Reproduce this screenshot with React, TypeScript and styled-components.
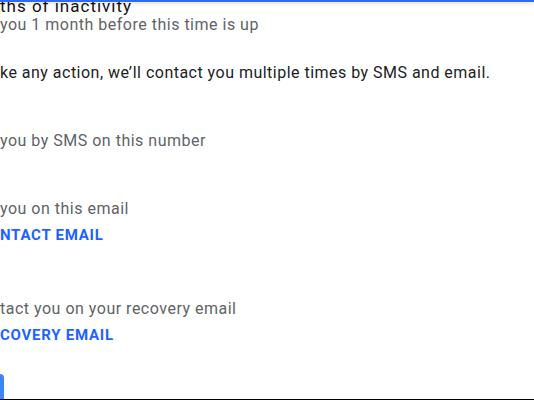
import styled, { createGlobalStyle } from "styled-components";

const GlobalStyle = createGlobalStyle`
  html, body {
    margin: 0;
    padding: 0;
    background: #ffffff;
  }
  body {
    font-family: Roboto, "Liberation Sans", Arial, sans-serif;
    -webkit-font-smoothing: antialiased;
  }
`;

const rows = [
  { text: "you by SMS on this number", gap: 48 },
  { text: "you on this email", action: "NTACT EMAIL", gap: 48 },
  { text: "tact you on your recovery email", action: "COVERY EMAIL", gap: 54 },
];

export default function App() {
  return (
    <Frame>
      <GlobalStyle />
      <TopBar />
      <Content>
        <Heading>ths of inactivity</Heading>
        <Hint>you 1 month before this time is up</Hint>
        <Notice>
          ke any action, we’ll contact you multiple times by SMS and email.
        </Notice>
        {rows.map(({ text, action, gap }) => (
          <Row key={text} $gap={gap}>
            <Hint>{text}</Hint>
            {action && <ActionLink>{action}</ActionLink>}
          </Row>
        ))}
        <SaveButton aria-label="Save" />
      </Content>
    </Frame>
  );
}

const Frame = styled.div`
  width: 534px;
  height: 400px;
  box-sizing: border-box;
  overflow: hidden;
  border-bottom: 1px solid #000000;
  background: #ffffff;
`;

const TopBar = styled.div`
  position: fixed;
  top: 0;
  left: 0;
  width: 534px;
  height: 2px;
  background: #2f6bea;
  box-shadow: 0 1px 4px rgba(0, 0, 0, 0.22);
  z-index: 2;
`;

const Content = styled.main`
  display: flex;
  flex-direction: column;
  align-items: flex-start;
  margin-top: -3px;
`;

const Heading = styled.h2`
  margin: 0;
  font-size: 17px;
  line-height: 18px;
  font-weight: 400;
  letter-spacing: 1px;
  color: #111111;
  white-space: nowrap;
`;

const Hint = styled.p`
  margin: 0;
  font-size: 16px;
  line-height: 20px;
  letter-spacing: 0.5px;
  color: #5f6368;
  white-space: nowrap;
`;

const Notice = styled.p`
  margin: 28px 0 0;
  font-size: 16px;
  line-height: 20px;
  letter-spacing: 0.48px;
  color: #202124;
  white-space: nowrap;
`;

const Row = styled.section<{ $gap: number }>`
  display: flex;
  flex-direction: column;
  gap: 6px;
  margin-top: ${({ $gap }) => $gap}px;
`;

const ActionLink = styled.a`
  font-size: 15px;
  line-height: 20px;
  font-weight: 700;
  color: #1d63ff;
  letter-spacing: 0.75px;
  text-decoration: none;
  white-space: nowrap;
  cursor: pointer;
`;

const SaveButton = styled.button`
  margin: 29px 0 0 -60px;
  width: 64px;
  height: 36px;
  border: none;
  border-radius: 4px;
  background: #3d84f7;
`;
